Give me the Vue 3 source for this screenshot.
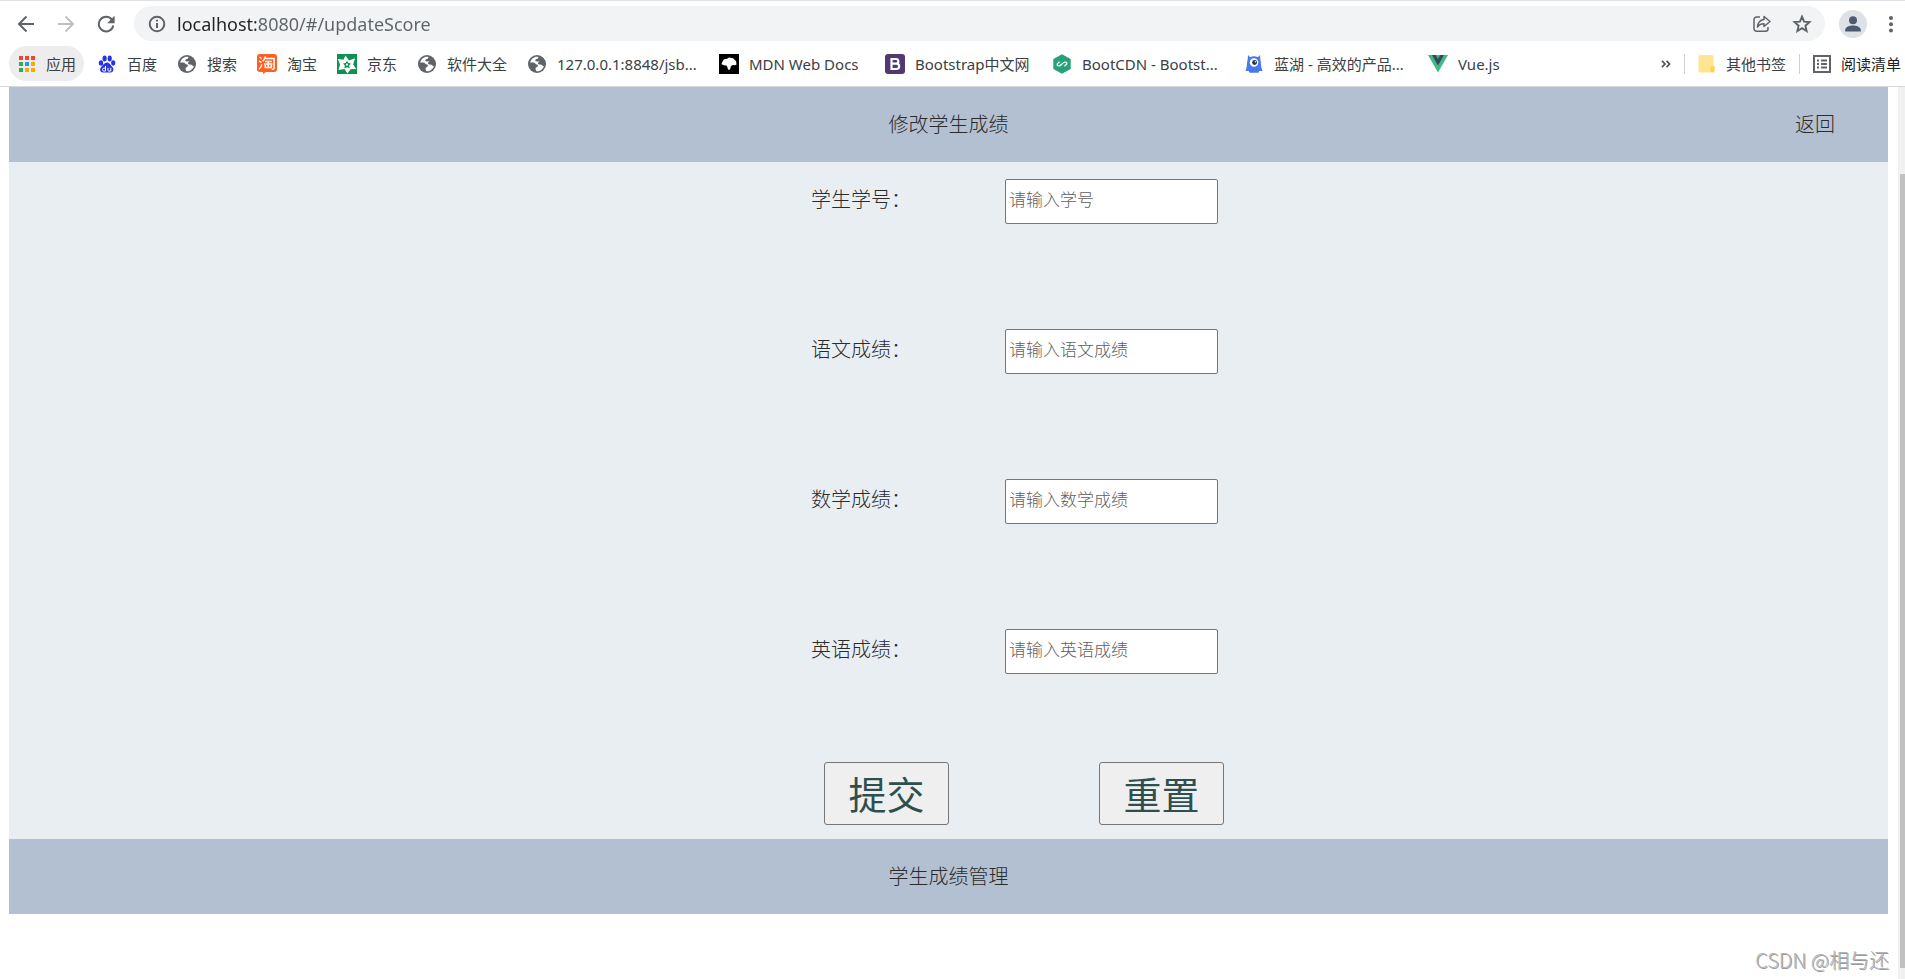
<script setup>
import { ref, reactive } from 'vue'

const url = ref('localhost:8080/#/updateScore')

const bookmarks = [
  { icon: 'baidu', text: '百度', width: 30 },
  { icon: 'globe', text: '搜索', width: 30 },
  { icon: 'taobao', text: '淘宝', width: 30 },
  { icon: 'jd', text: '京东', width: 30 },
  { icon: 'globe', text: '软件大全', width: 60 },
  { icon: 'globe', text: '127.0.0.1:8848/jsb...', width: 142 },
  { icon: 'mdn', text: 'MDN Web Docs', width: 116 },
  { icon: 'bootstrap', text: 'Bootstrap中文网', width: 117 },
  { icon: 'bootcdn', text: 'BootCDN - Bootst...', width: 142 },
  { icon: 'lanhu', text: '蓝湖 - 高效的产品...', width: 134 },
  { icon: 'vue', text: 'Vue.js', width: 44 },
]

const appDots = ['#f44336', '#f44336', '#f44336', '#34a853', '#2196f3', '#fbab00', '#34a853', '#fbab00', '#fbab00']

const fields = [
  { id: 'sid', label: '学生学号：', hint: '请输入学号' },
  { id: 'chinese', label: '语文成绩：', hint: '请输入语文成绩' },
  { id: 'math', label: '数学成绩：', hint: '请输入数学成绩' },
  { id: 'english', label: '英语成绩：', hint: '请输入英语成绩' },
]
const score = reactive({ sid: '', chinese: '', math: '', english: '' })
</script>

<template>
  <div class="window">
    <header class="chrome">
      <div class="toolbar">
        <button class="tool" type="button" aria-label="后退">
          <svg width="18" height="18" viewBox="0 0 18 18" fill="none" stroke="#5f6368" stroke-width="2"><path d="M17 9H2M9.500 1.500L2 9l7.500 7.500" /></svg>
        </button>
        <button class="tool" type="button" aria-label="前进">
          <svg width="18" height="18" viewBox="0 0 18 18" fill="none" stroke="#bdbfc1" stroke-width="2"><path d="M1 9h15M8.500 1.500L16 9l-7.500 7.500" /></svg>
        </button>
        <button class="tool" type="button" aria-label="重新加载">
          <svg width="18" height="18" viewBox="0 0 18 18"><path d="M14.800 4.500A7.300 7.300 0 1 0 16.300 10.500" fill="none" stroke="#5f6368" stroke-width="2" /><path d="M17.600 .8v7.400h-7.400z" fill="#5f6368" /></svg>
        </button>
        <div class="omnibox">
          <svg width="18" height="18" viewBox="0 0 18 18" fill="none" stroke="#5f6368" stroke-width="2"><circle cx="9" cy="9" r="7.300" /><path d="M9 8v5M9 4.800v1.800" /></svg>
          <input v-model="url" class="url" type="text" aria-label="地址栏" spellcheck="false" />
          <button class="tool" type="button" aria-label="分享">
            <svg width="18" height="18" viewBox="0 0 18 18" fill="none" stroke="#5f6368" stroke-width="1.500" stroke-linejoin="round"><path d="M7 2H3.500A2.500 2.500 0 0 0 1 4.500v9.300a2.500 2.500 0 0 0 2.500 2.500h9a2.500 2.500 0 0 0 2.500-2.500V12" /><path d="M11 1.500L17 6.500l-6 5V8.700C8 8.600 6 9.600 4.500 12 4.800 8 7 5 11 4.500z" /></svg>
          </button>
          <button class="tool" type="button" aria-label="添加书签">
            <svg width="20" height="20" viewBox="0 0 20 20" fill="none" stroke="#5f6368" stroke-width="1.900"><path d="M10 2.600l2.100 5 5.400.5-4.100 3.600 1.200 5.300-4.600-2.800L5.400 17l1.200-5.300L2.500 8.100l5.400-.5z" /></svg>
          </button>
        </div>
        <button class="avatar" type="button" aria-label="用户">
          <svg width="28" height="28" viewBox="0 0 28 28"><circle cx="14" cy="14" r="14" fill="#dee1e6" /><circle cx="14" cy="10.200" r="4" fill="#4d5b70" /><path d="M6.200 21.500v-1.300c0-3.400 4.600-4.700 7.800-4.700s7.800 1.300 7.800 4.700v1.300z" fill="#4d5b70" /></svg>
        </button>
        <button class="more" type="button" aria-label="更多">
          <svg width="4" height="18" viewBox="0 0 4 18" fill="#5f6368"><circle cx="2" cy="3" r="2" /><circle cx="2" cy="9.300" r="2" /><circle cx="2" cy="15.600" r="2" /></svg>
        </button>
      </div>

      <nav class="bookmarks">
        <a class="apps" href="#">
          <svg width="18" height="18" viewBox="0 0 18 18">
            <rect v-for="(c, i) in appDots" :key="i" :x="1 + (i % 3) * 6" :y="1 + Math.floor(i / 3) * 6" width="4" height="4" :fill="c" />
          </svg>
          <span>应用</span>
        </a>
        <a v-for="(b, i) in bookmarks" :key="i" class="mark" href="#">
          <svg v-if="b.icon === 'baidu'" width="20" height="20" viewBox="0 0 20 20" fill="#2932e1">
            <ellipse cx="4" cy="9" rx="2.200" ry="2.700" /><ellipse cx="7.600" cy="4.500" rx="2.100" ry="2.900" /><ellipse cx="12.700" cy="4.500" rx="2.100" ry="2.900" /><ellipse cx="16.200" cy="9" rx="2.100" ry="2.700" />
            <path d="M10 8.500c2.600 0 3.400 2.600 5 4 2.500 2.200 1.500 6-1.200 6-1.700 0-5.600-.2-7.400 0-3.600.4-4.400-3.900-1.600-6.200C6.500 10.900 7.400 8.500 10 8.500z" />
            <path d="M8.500 12v5.100H7a1.500 1.500 0 0 1 0-3h1.500M11 13.800v2.500q0 .8.800.8h2v-3.300" fill="none" stroke="#fff" stroke-width="1" />
          </svg>
          <svg v-else-if="b.icon === 'globe'" width="20" height="20" viewBox="0 0 20 20">
            <circle cx="10" cy="10" r="9" fill="#5f6368" />
            <path d="M11.500 3C8 2 4 4.500 3.200 8.500c2 .2 4.300-.2 5 1 .7 1.300 2.800.8 2.800 2 0 1.700-2.300 1.300-2.500 3-.1 1.200.7 2 1 2.800 3.500.3 6.500-2 7.400-5.300-1.200.2-1.500-1-2.700-1.300-1.200-.3-2.700 0-3.100-1-.5-1.200.8-1.700 1.600-1.900-1.200-.9-3.200.2-4.200-.8-.8-.9.300-2 1.400-2.100 1.300-.1 1.100-1 1.600-1.900z" fill="#fff" />
          </svg>
          <svg v-else-if="b.icon === 'taobao'" width="20" height="20" viewBox="0 0 20 20">
            <path d="M3 0h14a3 3 0 0 1 3 3v12a3 3 0 0 1-3 3H9l-3 2v-2H3a3 3 0 0 1-3-3V3a3 3 0 0 1 3-3z" fill="#ff5f1f" />
            <path d="M2.500 3l2.200 1.500M2 7l2.500 1.300M2 15c1.500-1 2.500-2.500 2.800-4.500M8.500 2.500C8 4.500 7 6 5.800 7.200M7.800 4.500h9.300v9.300q0 1.700-2.300 1.500M8 7.500h7M7 10h8.500M11.200 7.500v6M8.300 11v2.600h6V11" fill="none" stroke="#fff" stroke-width="1.500" />
          </svg>
          <svg v-else-if="b.icon === 'jd'" width="20" height="20" viewBox="0 0 20 20">
            <rect width="20" height="20" fill="#0f9152" />
            <path d="M8.500 1.500l3.500 5 6-2.300-1.800 6.300 3 4.500-5.700.2-3 4.300-3-4.500-6 1L3 10.500.8 5l5.700.8z" fill="#fff" />
            <path d="M10 6.800l1.300 2.300 2.700.4-1.800 2 .4 2.800-2.600-1-2.600 1 .4-2.800-1.800-2 2.700-.4z" fill="#0f9152" /><circle cx="10" cy="10.700" r="1.100" fill="#fff" />
          </svg>
          <svg v-else-if="b.icon === 'mdn'" width="20" height="20" viewBox="0 0 20 20">
            <rect width="20" height="20" /><path d="M3 8.500L5 5.200l3-.4 2-1.300 4 .8 3 2.700.5 3.500-1.500.8-2-.3-2 1-1 3.500-2 .2-.5-2.200-1-2-2.500-.3-2.500-1z" fill="#fff" />
          </svg>
          <svg v-else-if="b.icon === 'bootstrap'" width="20" height="20" viewBox="0 0 20 20">
            <rect width="20" height="20" rx="3" fill="#503873" /><path d="M6.500 5H11a2.300 2.300 0 0 1 0 4.700H6.500zM6.500 9.700h5a2.600 2.600 0 0 1 0 5.300h-5z" fill="none" stroke="#fff" stroke-width="2.200" />
          </svg>
          <svg v-else-if="b.icon === 'bootcdn'" width="20" height="20" viewBox="0 0 20 20">
            <path d="M10 .3l8.700 4.800v9.800L10 19.700l-8.700-4.800V5.100z" fill="#28a078" /><path d="M7.500 7.800L5.200 10q-.5 1.800 1.800 2 1 0 3-2t3-2q2.300.2 1.800 2l-2.300 2.200" fill="none" stroke="#fff" stroke-width="1.200" />
          </svg>
          <svg v-else-if="b.icon === 'lanhu'" width="20" height="20" viewBox="0 0 20 20">
            <path d="M4 1l2 2.300q4-2 8 0L16 1l.3 4.500c1.200 4 .2 6.500 2.200 11.500h-3.300l-.8 1.700H5.600L4.800 17H1.500C3.500 12 2.500 9.500 3.700 5.500z" fill="#4678ee" /><circle cx="10" cy="8.500" r="4.300" fill="#fff" /><circle cx="10.600" cy="8.500" r="2.400" fill="#27334d" /><circle cx="11.400" cy="7.700" r=".7" fill="#fff" />
          </svg>
          <svg v-else width="20" height="20" viewBox="0 0 20 20">
            <path d="M0 1h20L10 18.500z" fill="#41b883" /><path d="M4 1h3.700L10 5l2.300-4H16l-6 10.500z" fill="#35495e" />
          </svg>
          <span :style="{ width: b.width + 'px' }">{{ b.text }}</span>
        </a>
        <div class="right">
          <button class="overflow" type="button" aria-label="更多书签">
            <svg width="10" height="8" viewBox="0 0 10 8" fill="none" stroke="#4f5358" stroke-width="1.700"><path d="M1 .8L4 4 1 7.200M5.500 .8l3 3.200-3 3.200" /></svg>
          </button>
          <i class="divider"></i>
          <a class="mark" href="#">
            <svg width="18" height="20" viewBox="0 0 18 20"><path d="M2 1h12a1.500 1.500 0 0 1 1.500 1.500V12h1.200v5a2 2 0 0 1-2 1.500H2A1.500 1.500 0 0 1 .5 17V2.500A1.500 1.500 0 0 1 2 1z" fill="#ffe592" /><path d="M14.500 18.500a2 2 0 0 1-2-2v-4.300h3.800v4.300a2 2 0 0 1-1.800 2z" fill="#fbd44c" /></svg>
            <span>其他书签</span>
          </a>
          <i class="divider"></i>
          <a class="mark reading" href="#">
            <svg width="18" height="18" viewBox="0 0 18 18" fill="none" stroke="#5f6368" stroke-width="2"><path d="M1 1h16v16H1zM4 5.500h2M8 5.500h6M4 9h2M8 9h6M4 12.500h2M8 12.500h6" /></svg>
            <span>阅读清单</span>
          </a>
        </div>
      </nav>
    </header>

    <div class="viewport">
      <div class="page">
        <header class="bar top">
          <span></span>
          <span>修改学生成绩</span>
          <a class="back" href="#">返回</a>
        </header>
        <main class="main">
          <form class="form" @submit.prevent>
            <div v-for="f in fields" :key="f.id" class="row">
              <label :for="f.id">{{ f.label }}</label>
              <input :id="f.id" v-model="score[f.id]" type="text" :placeholder="f.hint" />
            </div>
            <div class="actions">
              <button type="submit">提交</button>
              <button type="reset">重置</button>
            </div>
          </form>
        </main>
        <footer class="bar">学生成绩管理</footer>
      </div>
      <div class="scrollbar" aria-hidden="true"><div class="thumb"></div></div>
    </div>
    <div class="watermark">CSDN @相与还</div>
  </div>
</template>

<style>
body {
  margin: 0;
}
</style>

<style scoped>
* {
  box-sizing: border-box;
}
.window {
  position: relative;
  display: flex;
  flex-direction: column;
  min-height: 100vh;
  overflow: hidden;
  background: #fff;
  color: #2b2b2b;
  font-family: "Noto Sans", "Noto Sans CJK SC", sans-serif;
}
button {
  font-family: inherit;
  cursor: pointer;
}
a {
  color: inherit;
  text-decoration: none;
}
svg {
  display: block;
  flex: none;
}
.chrome {
  border-top: 1px solid #dee1e6;
  border-bottom: 1px solid #d5d7da;
}
.toolbar {
  display: flex;
  align-items: center;
  height: 45px;
  padding: 0 12px 0 17px;
}
.tool,
.avatar,
.more,
.overflow {
  display: flex;
  padding: 0;
  border: 0;
  background: none;
}
.toolbar > .tool {
  margin-right: 22px;
}
.omnibox {
  display: flex;
  flex: 1;
  align-items: center;
  gap: 21px;
  height: 35px;
  margin-right: 14px;
  padding: 0 13px 0 14px;
  border-radius: 18px;
  background: #f1f3f4;
}
.toolbar > .tool + .omnibox {
  margin-left: -3px;
}
.url {
  flex: 1;
  min-width: 0;
  height: 28px;
  margin-left: -10px;
  padding: 0;
  border: 0;
  outline: 0;
  background: linear-gradient(90deg, #202124 79px, #5f6368 79px);
  background-clip: text;
  color: transparent;
  font-family: inherit;
  font-size: 18px;
}
.more {
  margin-left: 22px;
}
.bookmarks {
  display: flex;
  align-items: center;
  gap: 20px;
  height: 40px;
  padding: 0 4px 5px 9px;
  font-size: 15px;
  line-height: 20px;
  color: #3c4043;
  white-space: nowrap;
}
.apps {
  display: flex;
  align-items: center;
  gap: 10px;
  height: 35px;
  margin-right: -7px;
  padding: 0 8px 0 9px;
  border-radius: 18px;
  background: #ededed;
}
.mark {
  display: flex;
  align-items: center;
  gap: 10px;
}
.right {
  display: flex;
  align-items: center;
  gap: 13px;
  margin-left: auto;
}
.reading {
  color: #202124;
}
.divider {
  width: 1px;
  height: 20px;
  background: #cfd1d4;
}
.viewport {
  display: flex;
  flex: 1;
}
.page {
  flex: 1;
  margin: 0 10px 0 9px;
  font-size: 20px;
  font-weight: 300;
}
.bar {
  height: 75px;
  padding: 0 25px;
  background: #b3c0d1;
  line-height: 75px;
  text-align: center;
}
.top {
  display: grid;
  grid-template-columns: 1fr auto 1fr;
}
.back {
  padding-right: 28px;
  text-align: right;
}
.main {
  display: flex;
  justify-content: center;
  padding: 0 0 14px 138px;
  background: #e9eef3;
}
.form {
  width: 413px;
}
.row {
  display: grid;
  grid-template-columns: 194px 213px;
  align-items: start;
  height: 150px;
  padding-top: 17px;
}
.row label {
  line-height: 42px;
}
.row input {
  height: 45px;
  padding: 0 3px 5px;
  border: 1px solid #767676;
  border-radius: 2px;
  background: #fff;
  font-family: inherit;
  font-size: 17px;
  font-weight: 300;
}
.row input::placeholder {
  color: #606060;
}
.actions {
  display: flex;
  justify-content: space-between;
  padding-left: 13px;
}
.actions button {
  width: 125px;
  height: 63px;
  padding: 0;
  border: 1px solid #767676;
  border-radius: 3px;
  background: #efefef;
  color: #2f4f4f;
  font-size: 38px;
  line-height: 56px;
}
.scrollbar {
  width: 7px;
  padding: 87px 0 11px 2px;
  background: #f1f1f1;
}
.thumb {
  height: 100%;
  background: #c1c1c1;
}
.watermark {
  position: absolute;
  right: 16px;
  bottom: 5px;
  color: #b4b4b4;
  font-family: "Noto Sans CJK SC", sans-serif;
  font-size: 20px;
  font-weight: 300;
  line-height: 28px;
  text-shadow: 1px 1px 0 #9a9a9a;
}
</style>
